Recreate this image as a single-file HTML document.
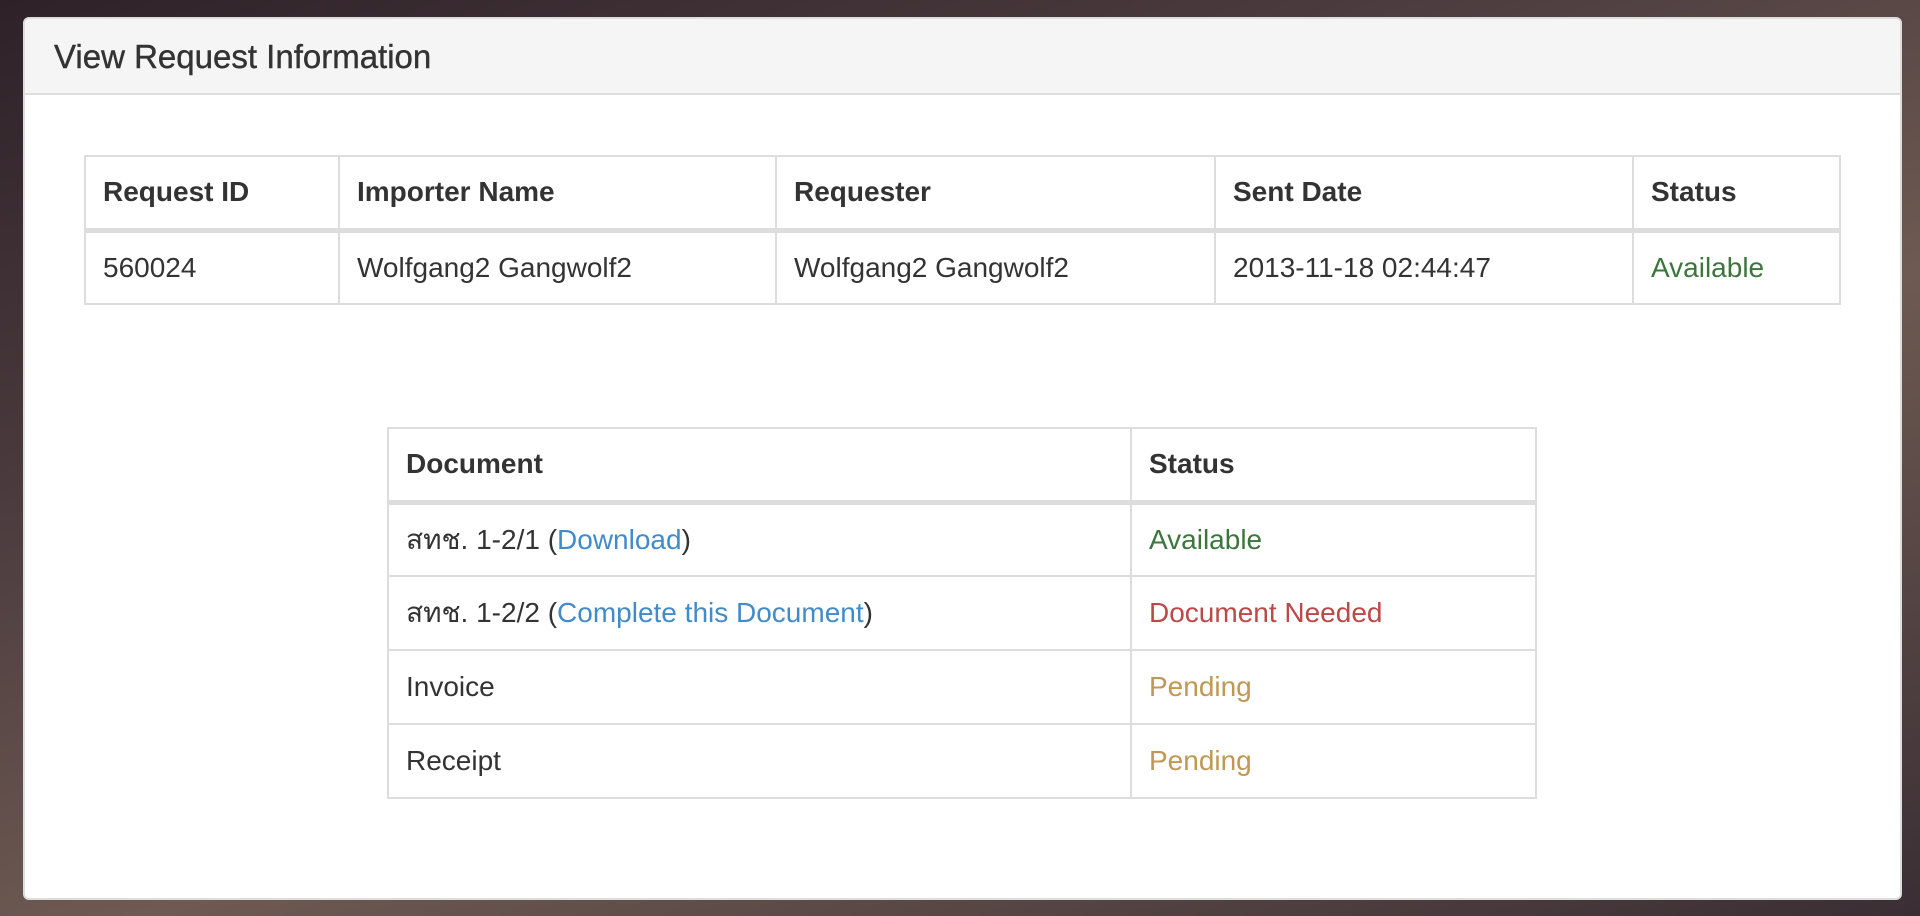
<!DOCTYPE html>
<html><head><meta charset="utf-8"><style>
html,body{margin:0;padding:0;width:1920px;height:916px;overflow:hidden}
body{background:linear-gradient(160deg,#2e2228 0%,#4a3a3e 30%,#6e5a52 60%,#3a2e34 100%);font-family:"Liberation Sans",Arial,sans-serif;color:#333}
.panel{position:absolute;left:23px;top:17px;width:1879px;height:883px;background:#fff;border:2px solid #ddd;border-radius:6px;box-sizing:border-box;overflow:hidden}
.hd{height:76px;background:#f5f5f5;border-bottom:2px solid #ddd;box-sizing:border-box}
.hd span{position:absolute;left:29px;top:19px;font-size:33px;color:#333;-webkit-text-stroke:0.4px #333}
table{position:absolute;border-collapse:collapse;table-layout:fixed;font-size:28px}
td,th{border:2.5px solid #ddd;padding:0 0 0 17px;text-align:left;height:74px;box-sizing:border-box}
th{font-weight:bold;border-bottom:5px solid #ddd}
.g{color:#3c763d}.r{color:#b94a48}.p{color:#c09853}a{color:#428bca;text-decoration:none}
</style></head><body>
<div class="panel">
<div class="hd"><span>View Request Information</span></div>
<table style="left:59px;top:136px;width:1755px">
<colgroup><col style="width:254px"><col style="width:437px"><col style="width:439px"><col style="width:418px"><col style="width:207px"></colgroup>
<tr><th>Request ID</th><th>Importer Name</th><th>Requester</th><th>Sent Date</th><th>Status</th></tr>
<tr><td>560024</td><td>Wolfgang2 Gangwolf2</td><td>Wolfgang2 Gangwolf2</td><td>2013-11-18 02:44:47</td><td class="g">Available</td></tr>
</table>
<table style="left:362px;top:408px;width:1148px">
<colgroup><col style="width:743px"><col style="width:405px"></colgroup>
<tr><th>Document</th><th>Status</th></tr>
<tr><td>สทช. 1-2/1 (<a>Download</a>)</td><td class="g">Available</td></tr>
<tr><td>สทช. 1-2/2 (<a>Complete this Document</a>)</td><td class="r">Document Needed</td></tr>
<tr><td>Invoice</td><td class="p">Pending</td></tr>
<tr><td>Receipt</td><td class="p">Pending</td></tr>
</table>
</div>
</body></html>
